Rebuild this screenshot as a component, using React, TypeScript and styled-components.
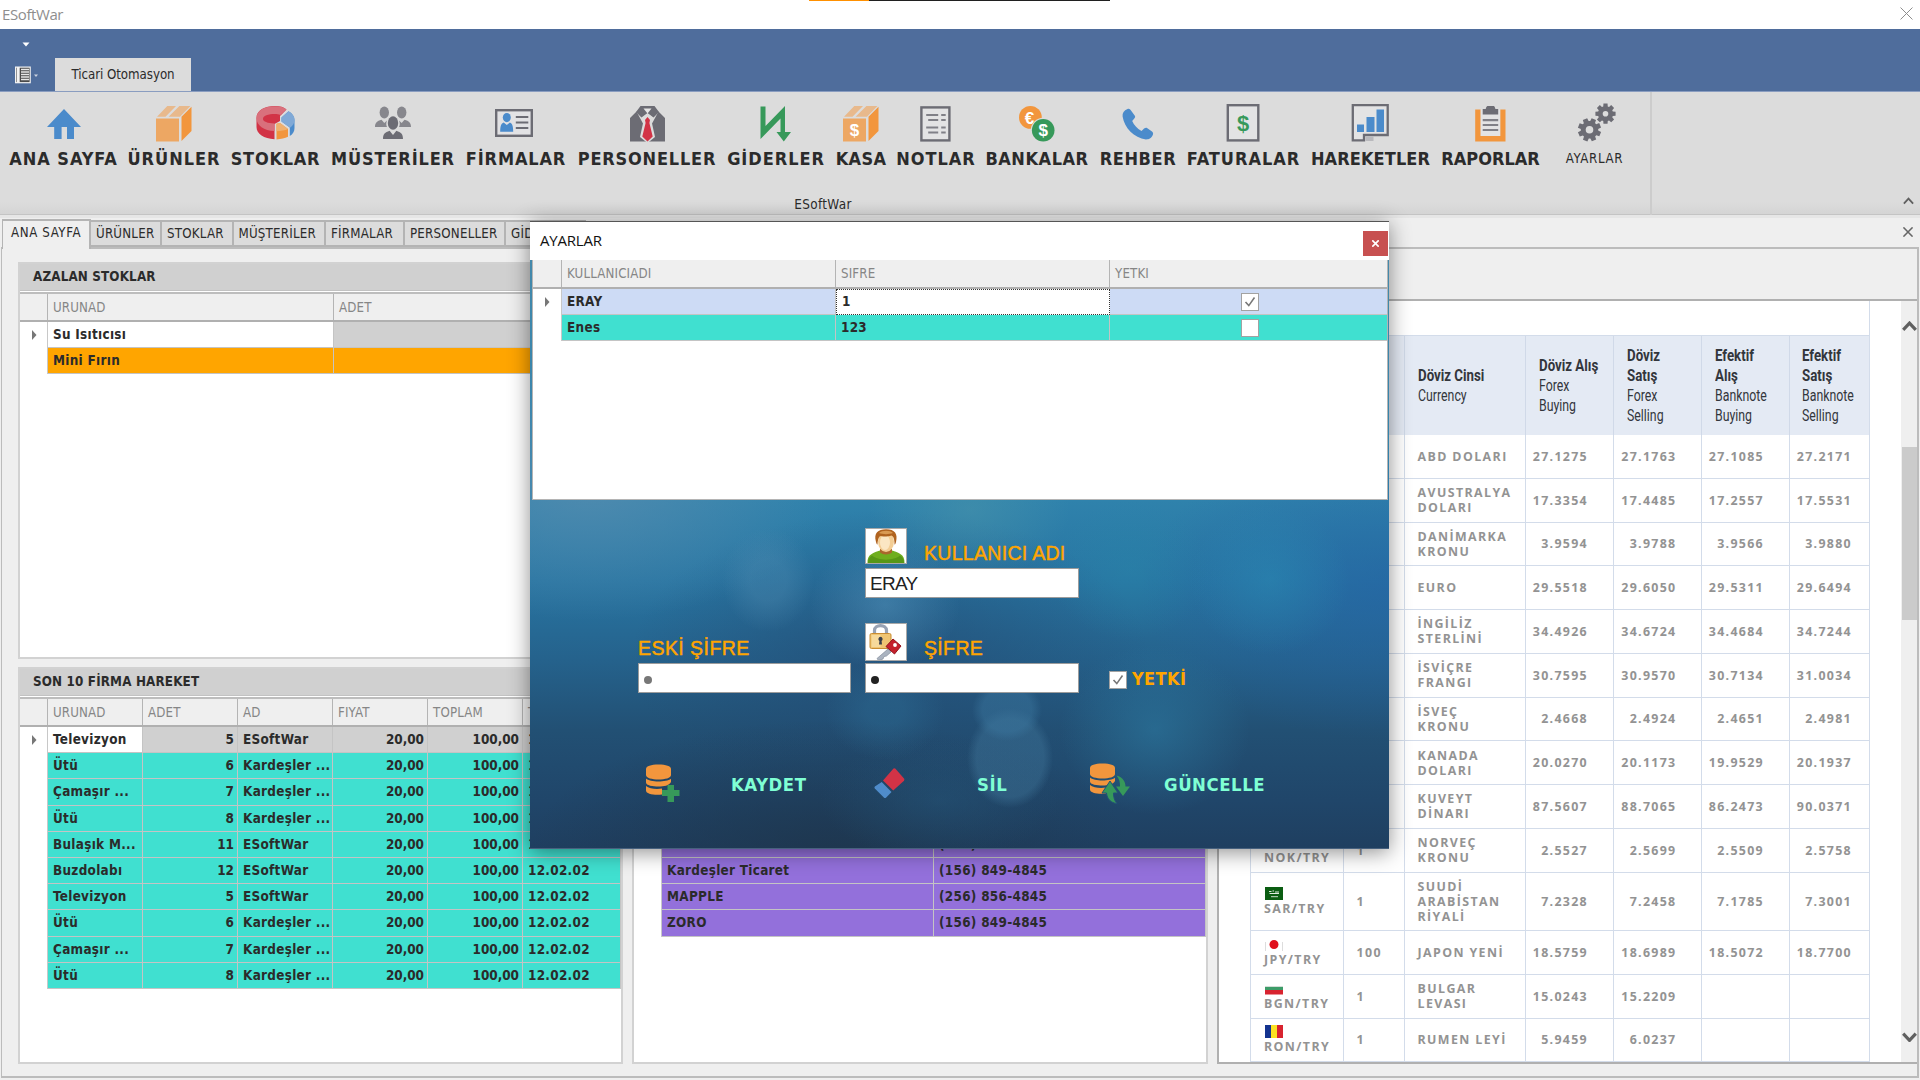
import React from 'react';
import styled, { createGlobalStyle, css } from 'styled-components';

const UI = `"DejaVu Sans Condensed", "DejaVu Sans", sans-serif`;
const SEGOE = `"Open Sans", "Noto Sans", sans-serif`;
const ARIAL = `"Liberation Sans", sans-serif`;

const Global = createGlobalStyle`
  * { box-sizing: border-box; }
  html, body { margin: 0; padding: 0; overflow: hidden; background: #efefef; }
`;

const Window = styled.div`
  position: relative;
  width: 1920px;
  height: 1080px;
  overflow: hidden;
  display: flex;
  flex-direction: column;
  background: #efefef;
  font-family: ${UI};
  color: #2b2b2b;
`;

/* ---------- window chrome ---------- */
const TitleBar = styled.div`
  height: 29px;
  background: #fff;
  display: flex;
  justify-content: space-between;
  align-items: center;
  padding: 0 7px 2px 2px;
  font: 15px ${SEGOE};
  letter-spacing: -0.4px;
  color: #8e8e8e;
`;
const TopMark = styled.div`
  position: absolute;
  top: 0;
  left: 809px;
  width: 301px;
  height: 1px;
  background: linear-gradient(90deg, #ff9000 60px, #202020 60px);
`;
const TabStrip = styled.div`
  height: 63px;
  background: #4f6d9c;
  border-bottom: 1px solid #8a9dc0;
  display: flex;
  flex-direction: column;
`;
const QuickRow = styled.div`
  height: 30px;
  display: flex;
  align-items: flex-start;
  padding: 13px 0 0 22px;
`;
const RibbonTabs = styled.div`
  display: flex;
  height: 33px;
`;
const AppButton = styled.div`
  width: 55px;
  padding: 8px 0 0 15px;
`;
const RibbonTab = styled.div`
  width: 136px;
  height: 33px;
  background: #dcdcdc;
  text-align: center;
  font-size: 13.2px;
  line-height: 33px;
  letter-spacing: -0.05px;
`;
const Ribbon = styled.div`
  height: 126px;
  background: linear-gradient(#dcdcdc 110px, #d4d4d4);
  border-bottom: 3px solid #e6e6e6;
  box-shadow: inset 0 -1px 0 #c4c4c4;
  display: flex;
`;
const RibbonGroup = styled.div`
  width: 1652px;
  border-right: 2px solid #cccccc;
  display: flex;
  flex-direction: column;
`;
const RibbonItems = styled.div`
  display: flex;
  height: 104px;
  padding: 11px 0 0 4px;
`;
const RibbonItem = styled.div<{ $w: number }>`
  width: ${p => p.$w}px;
  flex: none;
  display: flex;
  flex-direction: column;
  align-items: center;
  gap: 5px;
`;
const ItemLabel = styled.span<{ $light?: boolean; $ls?: number }>`
  font-size: ${p => (p.$light ? 13.2 : 18)}px;
  font-weight: ${p => (p.$light ? 400 : 700)};
  line-height: 21px;
  white-space: nowrap;
  letter-spacing: ${p => p.$ls ?? 0}px;
`;
const GroupCaption = styled.div`
  font-size: 13.4px;
  line-height: 20px;
  padding-right: 4px;
  text-align: center;
  letter-spacing: 0.35px;
`;
const RibbonRest = styled.div`
  flex: 1;
  display: flex;
  align-items: flex-end;
  justify-content: flex-end;
  padding: 0 6px 10px 0;
`;

/* ---------- document tabs ---------- */
const DocTabs = styled.div`
  height: 29px;
  padding-left: 2px;
  display: flex;
  align-items: flex-end;
  position: relative;
  z-index: 1;
`;
const DocTab = styled.div<{ $w: number; $active?: boolean }>`
  width: ${p => p.$w}px;
  height: 27px;
  flex: none;
  background: #dcdcdc;
  border: 2px solid #b4b4b4;
  border-left-width: 0;
  padding-left: 5px;
  font-size: 13.2px;
  line-height: 23px;
  letter-spacing: 0.22px;
  white-space: nowrap;
  overflow: hidden;
  ${p =>
    p.$active &&
    css`
      height: 30px;
      margin-bottom: -2px;
      padding-left: 8px;
      background: #efefef;
      border-left-width: 1px;
      border-bottom: none;
      line-height: 24px;
      letter-spacing: 0.6px;
    `}
`;
const DocClose = styled.div`
  flex: 1;
  display: flex;
  justify-content: flex-end;
  padding: 0 7px 10px 0;
`;
const Body = styled.div`
  height: 831px;
  margin: 0 1px 0 1px;
  border: 2px solid #bcbcbc;
  border-left-width: 1px;
  display: flex;
  padding: 13px 0 12px 16px;
`;
const LeftColumn = styled.div<{ $w: number }>`
  width: ${p => p.$w}px;
  flex: none;
  margin-right: 9px;
  display: flex;
  flex-direction: column;
  gap: 8px;
`;
const Panel = styled.section<{ $h: number }>`
  height: ${p => p.$h}px;
  flex: none;
  background: #fff;
  border: 2px solid #d2d2d2;
  display: flex;
  flex-direction: column;
  overflow: hidden;
`;
const PanelTitle = styled.header`
  height: 28px;
  flex: none;
  margin: -1px -2px 0;
  background: #d0d0d0;
  padding-left: 15px;
  font-size: 13.3px;
  font-weight: 700;
  line-height: 28px;
  letter-spacing: 0.15px;
  border-bottom: 1px solid #c2c2c2;
`;

/* ---------- grids ---------- */
const GridHead = styled.div<{ $cols: string; $first?: boolean }>`
  display: grid;
  grid-template-columns: ${p => p.$cols};
  height: ${p => (p.$first ? 29 : 30.5)}px;
  flex: none;
  margin-top: ${p => (p.$first ? 0 : 0.5)}px;
  background: #efefef;
  border-top: ${p => (p.$first ? 0 : 2)}px solid #bdbdbd;
  border-bottom: 2px solid #b0b0b0;
  font-size: 13.2px;
  line-height: 28px;
  color: #868686;
`;
const HeadCell = styled.div`
  border-right: 1px solid #b4b4b4;
  padding-left: 5px;
  letter-spacing: 0.15px;
  overflow: hidden;
  &:last-child { border-right: none; }
`;
const tones = {
  teal: '#40e0d0',
  orange: '#ffa500',
  grey: '#d0d0d0',
  purple: '#9370db',
  blue: '#cddbf5',
};
type Tone = keyof typeof tones;
const GridRow = styled.div<{ $cols: string; $h?: number }>`
  display: grid;
  grid-template-columns: ${p => p.$cols};
  height: ${p => p.$h ?? 26.2}px;
  flex: none;
`;
const Gutter = styled.div`
  display: flex;
  align-items: center;
  justify-content: center;
  border-right: 1px solid #c8c8c8;
`;
const Cell = styled.div<{ $tone: Tone; $right?: boolean; $focus?: 'plain' | 'dotted' }>`
  background: ${p => (p.$focus ? '#fff' : tones[p.$tone])};
  border-right: 1.5px solid #c4c4c4;
  border-bottom: 1.5px solid #c4c4c4;
  font-size: 13.4px;
  font-weight: 700;
  line-height: 25px;
  letter-spacing: ${p => (p.$right ? 0 : 0.3)}px;
  padding: 0 3px 0 5px;
  text-align: ${p => (p.$right ? 'right' : 'left')};
  white-space: nowrap;
  overflow: hidden;
  ${p =>
    p.$focus === 'dotted' &&
    css`
      border: 1px dotted #333;
      line-height: 23px;
    `}
`;
const HiddenRows = styled.div`
  height: 104.8px;
  flex: none;
  margin-left: 27px;
  background: ${tones.purple};
`;

/* ---------- exchange rates ---------- */
const RatesPanel = styled.section`
  flex: 1;
  height: 765px;
  margin-top: 37px;
  background: #fff;
  border: 2px solid #b0b0b0;
  border-right: none;
  display: flex;
  justify-content: space-between;
  overflow: hidden;
`;
const RatesTable = styled.div`
  width: 620px;
  margin-left: 31px;
  border: 1.5px solid #d3dcea;
  border-top: none;
  border-bottom: none;
`;
const rateCols = '92.5px 61px 121px 88px 88.5px 87.5px 1fr';
const RateBlank = styled.div`
  height: 34px;
`;
const RateHead = styled.div`
  display: grid;
  grid-template-columns: ${rateCols};
  height: 100px;
  background: #e4eaf4;
  border-top: 1.5px solid #d3dcea;
`;
const RateHeadCell = styled.div`
  border-right: 1.5px solid #d0d9e8;
  padding-left: 13px;
  display: flex;
  flex-direction: column;
  justify-content: center;
  &:last-child { border-right: none; padding-left: 12px; }
`;
const Narrow = styled.div<{ $bold?: boolean }>`
  font: ${p => (p.$bold ? 700 : 400)} 16px/20px "Roboto", sans-serif;
  color: #33363c;
  white-space: nowrap;
  transform: scaleX(${p => (p.$bold ? 0.83 : 0.77)});
  transform-origin: left;
`;
const RateRow = styled.div<{ $h: number }>`
  display: grid;
  grid-template-columns: ${rateCols};
  height: ${p => p.$h}px;
  border-bottom: 1.5px solid #d3dcea;
`;
const RateCell = styled.div<{ $num?: boolean }>`
  border-right: 1.5px solid #d3dcea;
  padding: ${p => (p.$num ? '0 24.5px 0 0' : '0 0 0 13px')};
  display: flex;
  flex-direction: column;
  justify-content: center;
  align-items: ${p => (p.$num ? 'flex-end' : 'flex-start')};
  font: 700 12.4px/15px ${SEGOE};
  letter-spacing: ${p => (p.$num ? 1.3 : 1.4)}px;
  color: #939393;
  white-space: nowrap;
  &:last-child { border-right: none; padding-right: ${p => (p.$num ? 17 : 0)}px; }
`;
const Flag = styled.svg`
  display: block;
  margin: 0 0 1px 1px;
`;
const ScrollBar = styled.div`
  width: 16px;
  background: #efefef;
  display: flex;
  flex-direction: column;
  align-items: center;
  padding-top: 20px;
`;
const Thumb = styled.div`
  width: 15px;
  height: 173px;
  margin: 115px 0 412px;
  background: #cbcbcb;
`;

/* ---------- settings dialog ---------- */
const Dialog = styled.div`
  position: absolute;
  left: 530px;
  top: 221px;
  width: 859px;
  height: 628px;
  border-top: 1px solid #555;
  background: #fff;
  box-shadow: 0 3px 20px rgba(0, 0, 0, 0.45);
  z-index: 5;
  display: flex;
  flex-direction: column;
`;
const DialogTitle = styled.div`
  height: 38px;
  flex: none;
  display: flex;
  justify-content: space-between;
  padding: 9px 0 0 10px;
  font: 15px/18px ${SEGOE};
  letter-spacing: -0.2px;
  color: #111;
`;
const CloseButton = styled.div`
  width: 25px;
  height: 25px;
  margin-right: 1px;
  background: #c75050;
  display: flex;
  align-items: center;
  justify-content: center;
`;
const DialogBody = styled.div`
  flex: 1;
  display: flex;
  flex-direction: column;
  padding: 0 1px 0 2px;
  border-bottom: 1px solid #47617e;
  background:
    radial-gradient(ellipse 46px 52px at 238px 320px, rgba(85, 145, 182, 0.32) 40%, transparent),
    radial-gradient(ellipse 75px 65px at 355px 345px, rgba(90, 155, 195, 0.45), transparent),
    radial-gradient(ellipse 35px 31px at 477px 450px, rgba(60, 120, 160, 0.45) 70%, transparent),
    radial-gradient(ellipse 43px 50px at 480px 498px, rgba(60, 112, 148, 0.5) 78%, transparent),
    radial-gradient(ellipse 60px 50px at 355px 450px, rgba(45, 110, 150, 0.4) 30%, transparent),
    radial-gradient(ellipse 100px 70px at 440px 250px, rgba(75, 150, 170, 0.5), transparent),
    radial-gradient(ellipse 80px 70px at 600px 310px, rgba(40, 135, 170, 0.4), transparent),
    radial-gradient(ellipse 80px 75px at 740px 320px, rgba(42, 140, 180, 0.5), transparent),
    radial-gradient(ellipse 95px 85px at 625px 470px, rgba(45, 125, 165, 0.55), transparent),
    radial-gradient(ellipse 120px 60px at 410px 540px, rgba(38, 92, 130, 0.4), transparent),
    radial-gradient(ellipse 240px 130px at 60px 230px, rgba(85, 140, 175, 0.8), transparent),
    radial-gradient(ellipse 300px 130px at 300px 590px, rgba(30, 52, 74, 0.75), transparent),
    radial-gradient(ellipse 260px 150px at 360px 400px, rgba(35, 72, 112, 0.6), transparent),
    radial-gradient(ellipse 250px 150px at 859px 330px, rgba(36, 98, 165, 0.6), transparent),
    linear-gradient(#4489ab 0, #2f82ac 240px, #2875a2 320px, #25628c 400px, #225074 470px, #20466a 540px, #1f3f60);
`;
const DialogGrid = styled.div`
  height: 240px;
  flex: none;
  background: #fff;
  border: 1px solid #b4b4b4;
  border-top: none;
`;
const CheckCell = styled(Cell)`
  display: flex;
  align-items: center;
  justify-content: center;
  border-right: none;
`;
const CheckBox = styled.span`
  width: 18px;
  height: 18px;
  flex: none;
  background: #fff;
  border: 1.5px solid #a2a2a2;
  display: flex;
  align-items: center;
  justify-content: center;
`;
const Form = styled.div`
  flex: 1;
  display: grid;
  grid-template-columns: 213px 214px 1fr;
  grid-template-rows: 70px 95px auto;
  column-gap: 14px;
  padding: 28px 0 0 106px;
`;
const Field = styled.div<{ $col: number; $row: number; $gap: number }>`
  grid-column: ${p => p.$col};
  grid-row: ${p => p.$row};
  display: flex;
  flex-direction: column;
  justify-content: flex-end;
  gap: ${p => p.$gap}px;
`;
const FieldHead = styled.div`
  display: flex;
  align-items: flex-end;
  gap: 17px;
`;
const FieldLabel = styled.label<{ $ls?: number; $drop?: number }>`
  font: 19.5px/24px ${ARIAL};
  letter-spacing: ${p => p.$ls ?? 0}px;
  margin-bottom: ${p => -(p.$drop ?? 0)}px;
  color: #ffa500;
  -webkit-text-stroke: 0.45px #ffa500;
  white-space: nowrap;
`;
const Picture = styled.div<{ $h: number }>`
  width: 42px;
  height: ${p => p.$h}px;
  border: 1px solid #a8a8a8;
  background: #fff;
  overflow: hidden;
`;
const Input = styled.div<{ $dim?: boolean }>`
  height: 30px;
  border: 1.5px solid #9c9c9c;
  background: #fff;
  padding-left: 4px;
  font: 19px/29px ${ARIAL};
  letter-spacing: -0.7px;
  color: ${p => (p.$dim ? '#777' : '#222')};
  display: flex;
  align-items: center;
`;
const Bullet = styled.i`
  width: 8px;
  height: 8px;
  margin-left: 1px;
  margin-top: 4px;
  border-radius: 50%;
  background: currentColor;
`;
const CheckField = styled.div`
  grid-column: 3;
  grid-row: 2;
  display: flex;
  align-items: flex-end;
  gap: 5px;
  padding: 0 0 4px 16px;
  font: 700 18px/20px ${UI};
  letter-spacing: 0.4px;
  color: #ffa500;
`;
const Actions = styled.div`
  grid-column: 1 / -1;
  display: flex;
  padding: 69px 0 0 2px;
`;
const Action = styled.div<{ $w: number; $pad: number }>`
  width: ${p => p.$w}px;
  height: 44px;
  display: flex;
  align-items: center;
  gap: ${p => p.$pad}px;
  padding-left: 5px;
  font-size: 18.4px;
  font-weight: 700;
  letter-spacing: 0.55px;
  color: #7fffd4;
`;

/* ---------- drawings ---------- */
const IconSvg = styled.svg`
  display: block;
  overflow: visible;
`;
const Icon = ({ children }: { children: React.ReactNode }) => (
  <IconSvg width="40" height="40" viewBox="0 0 40 40">{children}</IconSvg>
);

const DK = '#6c6c74';
const BLUE = '#4b8bcb';
const ORANGE = '#f2963d';
const GREEN = '#37995a';

function gear(cx: number, cy: number, r: number, rot: number) {
  const pts: string[] = [];
  for (let i = 0; i < 8; i++) {
    const a = ((i * 45 + rot) * Math.PI) / 180;
    const push = (rad: number, d: number) =>
      pts.push(`${(cx + rad * Math.cos(a + d)).toFixed(2)},${(cy + rad * Math.sin(a + d)).toFixed(2)}`);
    push(r * 0.74, -0.3);
    push(r, -0.2);
    push(r, 0.2);
    push(r * 0.74, 0.3);
  }
  return pts.join(' ');
}

const Box = () => (
  <>
    <rect x="2" y="15.5" width="23" height="23" fill="#eda763" />
    <path d="M27.5 13.7L37.5 3.8V28L27.5 38Z" fill={ORANGE} />
    <path d="M3 13.7L13.3 3H22L11.5 13.7ZM14.6 13.7L25.4 3H36.4L26 13.7Z" fill="#e8b98c" />
  </>
);

const icons: Record<string, React.ReactNode> = {
  home: <path d="M20 6L37 24H30V36H23V24H17.6V36H10.2V24H3Z" fill={BLUE} />,
  box: <Box />,
  donut: (
    <>
      <path d="M0.5 15C0.5 7 9 3 19 3C24 3 28 4 30.5 6.5L24 13V18L18.5 21V36.2C8 35.5 0.5 31 0.5 24Z" fill="#d23346" />
      <path d="M0.5 15C0.5 7.5 8.5 3.3 19 3.3C24 3.3 28 4.3 30.5 6.5L24.5 12C22.5 11.2 21 11 19 11C12 11 7 12.8 7 16C7 18.6 11.5 20.2 18.5 20.5V28C8 27.8 0.5 22.5 0.5 15Z" fill="#d9707c" />
      <path d="M32.5 8.2C36.5 10.5 38.5 13.5 38.5 17V25C38.5 28.5 37 31 33.8 33V24.5L25.5 18.5V14.5Z" fill={BLUE} />
      <path d="M32.5 8.2C36.5 10.5 38.5 13.5 38.5 17C38.5 20 37 22.5 34 24.7L25.5 18.5V14.5Z" fill="#80a9d6" />
      <path d="M20.5 20.8L24 20L32 26V33.8C29 35.2 25 36.2 20.5 36.4Z" fill={ORANGE} />
      <path d="M20.5 20.8L24 20L32 26C29 27.4 25 28 20.5 28.2Z" fill="#efb06e" />
    </>
  ),
  people: (
    <>
      <g fill="#87878d">
        <ellipse cx="11.3" cy="9.5" rx="4.7" ry="6" />
        <ellipse cx="28.7" cy="9.5" rx="4.7" ry="6" />
        <path d="M2 24C2 20 4 18 8.5 16.8L11.3 20L14 17.5C13 20 13 22 14 24Z" />
        <path d="M38 24C38 20 36 18 31.5 16.8L28.7 20L26 17.5C27 20 27 22 26 24Z" />
      </g>
      <g fill={DK}>
        <ellipse cx="20" cy="20" rx="5.2" ry="6.7" />
        <path d="M10 36C10 31 12 29.5 16.6 27.8L20 32L23.4 27.8C28 29.5 30 31 30 36Z" />
      </g>
    </>
  ),
  card: (
    <g>
      <rect x="0.2" y="7.2" width="35.6" height="25.6" fill="#e2e2e4" stroke={DK} strokeWidth="2.4" />
      <ellipse cx="10.8" cy="14.6" rx="4" ry="4.6" fill={BLUE} />
      <path d="M4.2 28.8C4.2 23 5.2 20.5 7.7 19.5L10.8 22L13.9 19.5C16.2 20.5 17.2 23 17.2 28.8Z" fill={BLUE} />
      <path d="M19.8 14H32.3M19.8 19.5H32.3M19.8 25H32.3" stroke={DK} strokeWidth="2.2" />
    </g>
  ),
  suit: (
    <>
      <path d="M3 38.5V15L9.5 8.5L20 28V38.5ZM38 38.5V15L31.5 8.5L21 28V38.5Z" fill={DK} />
      <path d="M9 9L13.5 3H27.5L32 9L26.5 14.5L20.5 10L14.5 14.5Z" fill={DK} />
      <path d="M16.5 5.5H24.5L20.5 10.5Z" fill="#e6e6e6" />
      <path d="M15 15L20.5 10.6L26 15L24.5 18L28 34L20.5 40L13 34L16.5 18Z" fill="#dcdcdc" />
      <path d="M18 17L20.5 14L23 17L22.4 20L25.7 33.5L20.5 38.5L15.3 33.5L18.6 20Z" fill="#d23346" />
    </>
  ),
  trend: (
    <path d="M4.5 3.5H9.5V23L29 3V29H35L27.8 38.5L20.5 29H24.5V15.5L4.5 36Z" fill={GREEN} />
  ),
  cash: (
    <>
      <Box />
      <text x="13.5" y="33" fontSize="17" fontWeight="700" fontFamily="Liberation Sans, sans-serif" textAnchor="middle" fill="#fff">$</text>
    </>
  ),
  note: (
    <g transform="translate(-0.8 0)">
      <rect x="6.2" y="4.4" width="28" height="33" fill="#e3e3e4" stroke={DK} strokeWidth="2.4" />
      <path d="M11 12H23M26 12H30.5M13 17H23M26 17H30.5M11 24.5H23M26 24.5H30.5M13 29.5H23M26 29.5H30.5" stroke="#808087" strokeWidth="2" />
    </g>
  ),
  coins: (
    <>
      <circle cx="13.4" cy="14.4" r="11.4" fill={ORANGE} />
      <text x="12.6" y="20.5" fontSize="17" fontWeight="700" fontFamily="Liberation Sans, sans-serif" textAnchor="middle" fill="#fff">€</text>
      <circle cx="26.2" cy="27.2" r="12.4" fill="#dcdcdc" />
      <circle cx="26.2" cy="27.2" r="11.3" fill={GREEN} />
      <text x="26.2" y="33.2" fontSize="17" fontWeight="700" fontFamily="Liberation Sans, sans-serif" textAnchor="middle" fill="#fff">$</text>
    </>
  ),
  phone: (
    <path d="M9.5 6C11 5.2 12 6 13 7.5L17 13C17.6 14.2 16.5 15.5 14.2 18C16 22 19 25.5 23.5 28C26 25.5 27.5 24.2 29 25L34 28.6C35.2 29.6 35.4 30.8 34.8 32C33 35.5 31 36.4 28 36.4C16 35 6.5 25 4.6 13.5C4.2 10 6 7.5 9.5 6Z" fill={BLUE} />
  ),
  invoice: (
    <>
      <rect x="3.8" y="2.2" width="30.5" height="35.2" fill="#e3e3e4" stroke={DK} strokeWidth="2.4" />
      <text x="19" y="27.5" fontSize="22" fontWeight="700" fontFamily="Liberation Sans, sans-serif" textAnchor="middle" fill={GREEN}>$</text>
    </>
  ),
  chart: (
    <g transform="translate(0.5 0)">
      <path d="M1.3 2.2H36.2V32H12.5V37.4H1.3Z" fill="#e3e3e4" stroke={DK} strokeWidth="2.3" />
      <path d="M14 33.5H22V38H14Z" fill="#b9b9bd" />
      <path d="M5.5 21.5H12.5V29H5.5ZM15 14H23V29H15ZM25 6.5H32.5V29H25Z" fill={BLUE} />
    </g>
  ),
  clip: (
    <g transform="translate(-0.8 0)">
      <path d="M5 6.5H10.5V33H30V6.5H35.3V38.5H5Z" fill={ORANGE} />
      <rect x="10.5" y="6.5" width="19.5" height="26.5" fill="#e3e3e4" />
      <path d="M12.5 11.5V6H15.5C16 3.5 17 3 18 3H23C24 3 24.6 3.5 25.2 6H28V11.5Z" fill={DK} />
      <path d="M12.5 17.2H28M12.5 22H28M12.5 27H28" stroke="#808087" strokeWidth="2.2" />
    </g>
  ),
  gears: (
    <g fill={DK}>
      <polygon points={gear(14.5, 26.8, 11.8, 22)} />
      <polygon points={gear(30.5, 10.7, 10.3, 0)} />
      <circle cx="14.5" cy="26.8" r="3.8" fill="#dcdcdc" />
      <circle cx="30.5" cy="10.7" r="2.8" fill="#dcdcdc" />
    </g>
  ),
};

const Cross = ({ size, color, w = 1 }: { size: number; color: string; w?: number }) => (
  <svg width={size} height={size} viewBox="0 0 12 12">
    <path d="M0.5 0.5L11.5 11.5M11.5 0.5L0.5 11.5" stroke={color} strokeWidth={w} fill="none" />
  </svg>
);
const Caret = ({ down, size = 14, w = 2.6 }: { down?: boolean; size?: number; w?: number }) => (
  <svg width={size} height={size * 0.7} viewBox="0 0 14 10">
    <path d={down ? 'M1 1.5L7 8L13 1.5' : 'M1 8.5L7 2L13 8.5'} stroke="#606060" strokeWidth={w} fill="none" />
  </svg>
);
const RowMark = () => (
  <svg width="6" height="10" viewBox="0 0 6 10"><path d="M1 0L5.5 5L1 10Z" fill="#777" /></svg>
);
const Tick = () => (
  <svg width="12" height="12" viewBox="0 0 12 12"><path d="M1.5 6L4.8 9.6L10.5 1.5" stroke="#777" strokeWidth="1.6" fill="none" /></svg>
);
const Database = () => (
  <g fill={ORANGE}>
    <path d="M1 5C1 2 6 0.5 13.5 0.5S26 2 26 5V11C26 14 20 15.5 13.5 15.5S1 14 1 11Z" />
    <path d="M1 14.5C5 18.5 21 18.5 26 14.8V18C24 21.8 19 22.5 13.5 22.5S1 21.5 1 18.5Z" />
    <path d="M1 22C4 25 12 25.6 17 24.6V30.6C9 31.5 1 30 1 26.5Z" />
  </g>
);
const Avatar = () => (
  <svg width="40" height="35" viewBox="0 0 40 35">
    <path d="M1.5 34C1 25 8 23.5 14 21.5H26C32 23.5 39 25 38.5 34Z" fill="#6fae1e" />
    <path d="M2 34C2 31 3 28 6 26.5C12 32 28 32 34 26.5C37 28 38 31 38 34Z" fill="#4f8d12" opacity="0.7" />
    <path d="M14 20H26V23.5C23 26 17 26 14 23.5Z" fill="#a9672c" />
    <ellipse cx="20" cy="12.5" rx="8" ry="10.5" fill="#f3cd94" />
    <ellipse cx="19" cy="13.5" rx="5" ry="7.5" fill="#fbe6c3" />
    <path d="M10 13C7.5 4 12 0.3 20 0.3C29 0.3 32 5 30 13C29.5 15 29 15.5 28.5 15.5C28.5 10 27.5 7.5 25.5 6.5C21 8 16 7.5 14 7C12 9 11.7 12 11.5 15.5C11 15.5 10.5 15 10 13Z" fill="#b0631f" />
    <path d="M13 4C16 1.2 24 1 27 4C23 5.5 17 5.5 13 4Z" fill="#d99a52" />
  </svg>
);
const LockKey = () => (
  <svg width="40" height="37" viewBox="0 0 40 37">
    <path d="M8.5 11V6.5C8.5 0 20.5 0 20.5 6.5V11" fill="none" stroke="#98a2b3" strokeWidth="3.2" />
    <rect x="4" y="9.5" width="21" height="15" rx="1.5" fill="#efc472" stroke="#c98d33" strokeWidth="1" />
    <rect x="5.5" y="11" width="9" height="12" fill="#f9e2ac" opacity="0.7" />
    <path d="M14.5 12.8A2.3 2.3 0 0 1 15.6 17L16 20.5H13L13.4 17A2.3 2.3 0 0 1 14.5 12.8Z" fill="#3a3f4a" />
    <path d="M22 25L11 34.5L12.5 36.5L17 35L18 32.5L20.5 32L25 28Z" fill="#aab3c0" stroke="#828c9b" strokeWidth="0.7" />
    <path d="M20 22.5L27 15L35 22L28.5 30Z" fill="#c4202c" stroke="#93141e" strokeWidth="1" strokeLinejoin="round" />
    <circle cx="29" cy="21" r="1.9" fill="#fff" />
  </svg>
);

/* ---------- data ---------- */
const ribbon: [string, string, number, number][] = [
  ['home', 'ANA SAYFA', 119, 0.95],
  ['box', 'ÜRÜNLER', 102, 1],
  ['donut', 'STOKLAR', 101, 0.75],
  ['people', 'MÜSTERİLER', 134, 0.85],
  ['card', 'FİRMALAR', 112, 0.85],
  ['suit', 'PERSONELLER', 150, 0.8],
  ['trend', 'GİDERLER', 108, 0.95],
  ['cash', 'KASA', 62, 0.35],
  ['note', 'NOTLAR', 88, 0.95],
  ['coins', 'BANKALAR', 114, 0.55],
  ['phone', 'REHBER', 88, 0.6],
  ['invoice', 'FATURALAR', 123, 1],
  ['chart', 'HAREKETLER', 131, 0.1],
  ['clip', 'RAPORLAR', 109, 0],
  ['gears', 'AYARLAR', 99, 0.65],
];
const docTabs: [string, number][] = [
  ['ÜRÜNLER', 71], ['STOKLAR', 71.5], ['MÜŞTERİLER', 92.5], ['FİRMALAR', 79], ['PERSONELLER', 101], ['GİDERLER', 80],
];
const stockCols = '28px 286px 1fr';
const moveCols = '28px 95px 95px 95px 95px 95px 1fr';
const moves: [string, string, string][] = [
  ['Televizyon', '5', 'ESoftWar'],
  ['Ütü', '6', 'Kardeşler ...'],
  ['Çamaşır ...', '7', 'Kardeşler ...'],
  ['Ütü', '8', 'Kardeşler ...'],
  ['Bulaşık M...', '11', 'ESoftWar'],
  ['Buzdolabı', '12', 'ESoftWar'],
  ['Televizyon', '5', 'ESoftWar'],
  ['Ütü', '6', 'Kardeşler ...'],
  ['Çamaşır ...', '7', 'Kardeşler ...'],
  ['Ütü', '8', 'Kardeşler ...'],
];
const contactCols = '28px 272px 1fr';
const contacts = [
  ['', '(156) 849-4845'],
  ['Kardeşler Ticaret', '(156) 849-4845'],
  ['MAPPLE', '(256) 856-4845'],
  ['ZORO', '(156) 849-4845'],
];
type Rate = { code?: string; unit?: string; name: string[]; v: string[]; h?: number };
const rates: Rate[] = [
  { name: ['ABD DOLARI'], v: ['27.1275', '27.1763', '27.1085', '27.2171'] },
  { name: ['AVUSTRALYA', 'DOLARI'], v: ['17.3354', '17.4485', '17.2557', '17.5531'] },
  { name: ['DANİMARKA', 'KRONU'], v: ['3.9594', '3.9788', '3.9566', '3.9880'] },
  { name: ['EURO'], v: ['29.5518', '29.6050', '29.5311', '29.6494'] },
  { name: ['İNGİLİZ', 'STERLİNİ'], v: ['34.4926', '34.6724', '34.4684', '34.7244'] },
  { name: ['İSVİÇRE', 'FRANGI'], v: ['30.7595', '30.9570', '30.7134', '31.0034'] },
  { name: ['İSVEÇ', 'KRONU'], v: ['2.4668', '2.4924', '2.4651', '2.4981'] },
  { name: ['KANADA', 'DOLARI'], v: ['20.0270', '20.1173', '19.9529', '20.1937'] },
  { name: ['KUVEYT', 'DİNARI'], v: ['87.5607', '88.7065', '86.2473', '90.0371'] },
  { code: 'NOK', unit: '1', name: ['NORVEÇ', 'KRONU'], v: ['2.5527', '2.5699', '2.5509', '2.5758'] },
  { code: 'SAR', unit: '1', name: ['SUUDİ', 'ARABİSTAN', 'RİYALİ'], v: ['7.2328', '7.2458', '7.1785', '7.3001'], h: 58.6 },
  { code: 'JPY', unit: '100', name: ['JAPON YENİ'], v: ['18.5759', '18.6989', '18.5072', '18.7700'] },
  { code: 'BGN', unit: '1', name: ['BULGAR', 'LEVASI'], v: ['15.0243', '15.2209', '', ''] },
  { code: 'RON', unit: '1', name: ['RUMEN LEYİ'], v: ['5.9459', '6.0237', '', ''] },
];
const flags: Record<string, React.ReactNode> = {
  NOK: <><rect width="18" height="13" fill="#d8232f" /><path d="M6 0V13M0 6.5H18" stroke="#fff" strokeWidth="3.4" /><path d="M6 0V13M0 6.5H18" stroke="#1c3a7a" strokeWidth="1.6" /></>,
  SAR: <><rect width="18" height="13" fill="#0b5d12" /><path d="M4 4.5H6.5M7.5 4H9M10 5H14M4.5 6.5H14" stroke="#dfeadf" strokeWidth="1.1" /><path d="M6 9.7H13" stroke="#dfeadf" strokeWidth="0.9" /></>,
  JPY: <><rect width="18" height="13" fill="#fff" /><path d="M0.5 4V13M17.5 4V13" stroke="#ddd" /><circle cx="9" cy="6.5" r="4.5" fill="#e0101c" /></>,
  BGN: <><rect y="4" width="18" height="4" fill="#3c9c68" /><rect y="4" width="18" height="1" fill="#d5ded8" /><rect y="8" width="18" height="4.5" fill="#d8232f" /></>,
  RON: <><rect width="6" height="13" fill="#14338f" /><rect x="6" width="6" height="13" fill="#fbe122" /><rect x="12" width="6" height="13" fill="#d8232f" /></>,
};
const rateHeads: [string[], string[]][] = [
  [['Döviz Cinsi'], ['Currency']],
  [['Döviz Alış'], ['Forex', 'Buying']],
  [['Döviz', 'Satış'], ['Forex', 'Selling']],
  [['Efektif', 'Alış'], ['Banknote', 'Buying']],
  [['Efektif', 'Satış'], ['Banknote', 'Selling']],
];
const userCols = '29px 274px 274px 1fr';

export default function App() {
  return (
    <Window>
      <Global />
      <TopMark />
      <TitleBar>
        <span>ESoftWar</span>
        <Cross size={13} color="#8a8a8a" w={0.9} />
      </TitleBar>
      <TabStrip>
        <QuickRow>
          <svg width="8" height="5" viewBox="0 0 8 5"><path d="M0.5 0.5H7.5L4 4.5Z" fill="#fff" /></svg>
        </QuickRow>
        <RibbonTabs>
          <AppButton>
            <svg width="25" height="18" viewBox="0 0 25 18">
              <rect x="0.6" y="1.1" width="14.6" height="15.6" fill="#4a4a4a" stroke="#f2f2f2" strokeWidth="1.2" />
              <path d="M3.2 1V17" stroke="#f2f2f2" strokeWidth="3" />
              <path d="M6 3.5H14M6 6H14M6 8.5H14M6 11H14M6 13.5H14" stroke="#e8e8e8" strokeWidth="1.3" />
              <path d="M19 8.5H23L21 11Z" fill="#ccd3e0" />
            </svg>
          </AppButton>
          <RibbonTab>Ticari Otomasyon</RibbonTab>
        </RibbonTabs>
      </TabStrip>
      <Ribbon>
        <RibbonGroup>
          <RibbonItems>
            {ribbon.map(([icon, label, w, ls]) => (
              <RibbonItem key={label} $w={w}>
                <Icon>{icons[icon]}</Icon>
                <ItemLabel $light={icon === 'gears'} $ls={ls}>{label}</ItemLabel>
              </RibbonItem>
            ))}
          </RibbonItems>
          <GroupCaption>ESoftWar</GroupCaption>
        </RibbonGroup>
        <RibbonRest><Caret size={11} w={2.4} /></RibbonRest>
      </Ribbon>
      <DocTabs>
        <DocTab $w={89} $active>ANA SAYFA</DocTab>
        {docTabs.map(([t, w]) => <DocTab key={t} $w={w}>{t}</DocTab>)}
        <DocClose><Cross size={10} color="#666" w={1.9} /></DocClose>
      </DocTabs>
      <Body>
        <LeftColumn $w={605}>
          <Panel $h={397}>
            <PanelTitle>AZALAN STOKLAR</PanelTitle>
            <GridHead $cols={stockCols}>
              <HeadCell /><HeadCell>URUNAD</HeadCell><HeadCell>ADET</HeadCell>
            </GridHead>
            <GridRow $cols={stockCols}>
              <Gutter><RowMark /></Gutter>
              <Cell $tone="grey" $focus="plain">Su Isıtıcısı</Cell>
              <Cell $tone="grey" />
            </GridRow>
            <GridRow $cols={stockCols}>
              <Gutter />
              <Cell $tone="orange">Mini Fırın</Cell>
              <Cell $tone="orange" />
            </GridRow>
          </Panel>
          <Panel $h={397}>
            <PanelTitle>SON 10 FİRMA HAREKET</PanelTitle>
            <GridHead $cols={moveCols}>
              <HeadCell />
              {['URUNAD', 'ADET', 'AD', 'FIYAT', 'TOPLAM', 'TARIH'].map(h => <HeadCell key={h}>{h}</HeadCell>)}
            </GridHead>
            {moves.map(([name, qty, firm], i) => {
              const tone: Tone = i === 0 ? 'grey' : 'teal';
              return (
                <GridRow key={i} $cols={moveCols}>
                  <Gutter>{i === 0 && <RowMark />}</Gutter>
                  <Cell $tone={tone} $focus={i === 0 ? 'plain' : undefined}>{name}</Cell>
                  <Cell $tone={tone} $right>{qty}</Cell>
                  <Cell $tone={tone}>{firm}</Cell>
                  <Cell $tone={tone} $right>20,00</Cell>
                  <Cell $tone={tone} $right>100,00</Cell>
                  <Cell $tone={tone}>12.02.02</Cell>
                </GridRow>
              );
            })}
          </Panel>
        </LeftColumn>
        <LeftColumn $w={576}>
          <Panel $h={397} />
          <Panel $h={397}>
            <PanelTitle />
            <GridHead $cols={contactCols} />
            <HiddenRows />
            {contacts.map(([name, tel], i) => (
              <GridRow key={i} $cols={contactCols}>
                <Gutter />
                <Cell $tone="purple">{name}</Cell>
                <Cell $tone="purple">{tel}</Cell>
              </GridRow>
            ))}
          </Panel>
        </LeftColumn>
        <RatesPanel>
          <RatesTable>
            <RateBlank />
            <RateHead>
              <RateHeadCell /><RateHeadCell />
              {rateHeads.map(([tr, en], i) => (
                <RateHeadCell key={i}>
                  {tr.map(t => <Narrow key={t} $bold>{t}</Narrow>)}
                  {en.map(t => <Narrow key={t}>{t}</Narrow>)}
                </RateHeadCell>
              ))}
            </RateHead>
            {rates.map((r, i) => (
              <RateRow key={i} $h={r.h ?? 43.75}>
                <RateCell>
                  {r.code && (
                    <>
                      <Flag width="18" height="13" viewBox="0 0 18 13">{flags[r.code]}</Flag>
                      {r.code}/TRY
                    </>
                  )}
                </RateCell>
                <RateCell>{r.unit}</RateCell>
                <RateCell>{r.name.map(n => <span key={n}>{n}</span>)}</RateCell>
                {r.v.map((v, k) => <RateCell key={k} $num>{v}</RateCell>)}
              </RateRow>
            ))}
          </RatesTable>
          <ScrollBar>
            <Caret size={15} w={3} />
            <Thumb />
            <Caret down size={15} w={3} />
          </ScrollBar>
        </RatesPanel>
      </Body>

      <Dialog>
        <DialogTitle>
          <span>AYARLAR</span>
          <CloseButton><Cross size={7} color="#fff" w={2.8} /></CloseButton>
        </DialogTitle>
        <DialogBody>
          <DialogGrid>
            <GridHead $cols={userCols} $first>
              <HeadCell /><HeadCell>KULLANICIADI</HeadCell><HeadCell>SIFRE</HeadCell><HeadCell>YETKI</HeadCell>
            </GridHead>
            <GridRow $cols={userCols}>
              <Gutter><RowMark /></Gutter>
              <Cell $tone="blue">ERAY</Cell>
              <Cell $tone="blue" $focus="dotted">1</Cell>
              <CheckCell $tone="blue"><CheckBox><Tick /></CheckBox></CheckCell>
            </GridRow>
            <GridRow $cols={userCols}>
              <Gutter />
              <Cell $tone="teal">Enes</Cell>
              <Cell $tone="teal">123</Cell>
              <CheckCell $tone="teal"><CheckBox /></CheckCell>
            </GridRow>
          </DialogGrid>
          <Form>
            <Field $col={2} $row={1} $gap={4}>
              <FieldHead>
                <Picture $h={36}><Avatar /></Picture>
                <FieldLabel $ls={0.3} $drop={1}>KULLANICI ADI</FieldLabel>
              </FieldHead>
              <Input>ERAY</Input>
            </Field>
            <Field $col={1} $row={2} $gap={3}>
              <FieldLabel $ls={0.45}>ESKİ ŞİFRE</FieldLabel>
              <Input $dim><Bullet /></Input>
            </Field>
            <Field $col={2} $row={2} $gap={2}>
              <FieldHead>
                <Picture $h={38}><LockKey /></Picture>
                <FieldLabel $ls={0.35} $drop={-1}>ŞİFRE</FieldLabel>
              </FieldHead>
              <Input><Bullet /></Input>
            </Field>
            <CheckField>
              <CheckBox><Tick /></CheckBox>
              <span>YETKİ</span>
            </CheckField>
            <Actions>
              <Action $w={228} $pad={50}>
                <svg width="36" height="40" viewBox="0 0 36 40">
                  <Database />
                  <path d="M23 20H29.5V25H35V31H29.5V37H23V31H17.5V25H23Z" fill={GREEN} transform="translate(-0.5 1)" />
                </svg>
                <span>KAYDET</span>
              </Action>
              <Action $w={216} $pad={70}>
                <svg width="34" height="34" viewBox="0 0 34 34">
                  <path d="M20.5 1.5Q21.5 0.8 22.5 1.8L31 11.5Q31.8 12.5 31 13.7L20.2 23.5L10 13.5Z" fill="#d23346" />
                  <path d="M8.7 15L18.5 25L13.2 30.5Q12 31.5 10.8 30.5L1.8 21.5Q1 20.5 1.8 19.5Z" fill="#4f8ccb" />
                </svg>
                <span>SİL</span>
              </Action>
              <Action $w={260} $pad={33}>
                <svg width="42" height="42" viewBox="0 0 42 42">
                  <Database />
                  <path d="M13 30L21 18L29 30H24.5C24.5 34 25.5 38 28 40.5C22 40 18 36 17.5 30Z" fill={GREEN} stroke="#235078" strokeWidth="1" />
                  <path d="M27.5 12.5C34 14 36.5 19 36.5 23.5H41L34 33L27 23.5H31C31 19.5 30.5 16 27.5 12.5Z" fill={GREEN} />
                </svg>
                <span>GÜNCELLE</span>
              </Action>
            </Actions>
          </Form>
        </DialogBody>
      </Dialog>
    </Window>
  );
}
